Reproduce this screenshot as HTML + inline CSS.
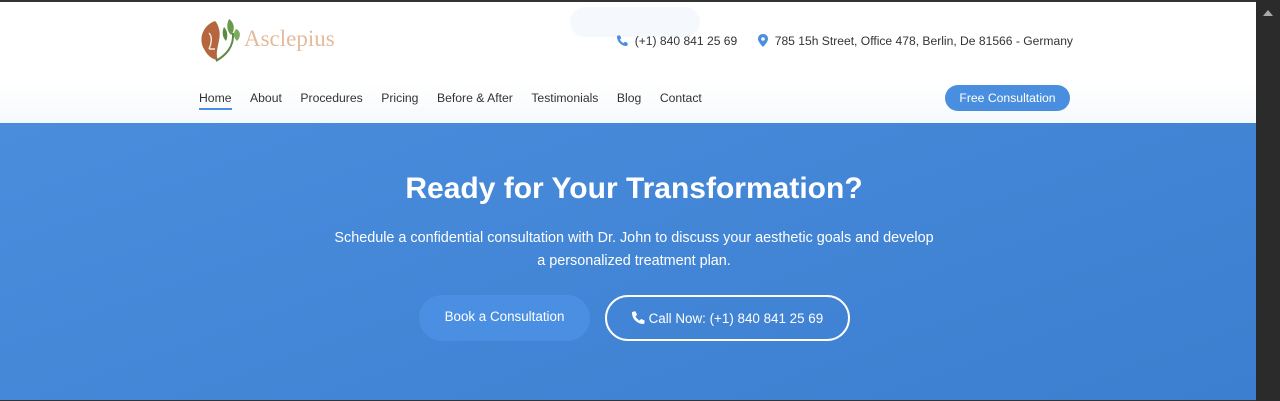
<!DOCTYPE html>
<html><head><meta charset="utf-8"><style>
*{margin:0;padding:0;box-sizing:border-box}
body{width:1280px;height:401px;overflow:hidden;background:#333;font-family:"Liberation Sans",Arial,sans-serif;position:relative}
.wrap{position:absolute;left:0;top:2px;width:1256px;height:398px;background:#fff}
.sb{position:absolute;left:1256px;top:0;width:24px;height:401px;background:#2b2b2b}
.sb:after{content:"";position:absolute;left:7px;top:10px;border:5px solid transparent;border-bottom:6px solid #aaa;border-top:0}
header{position:absolute;left:0;top:0;width:1256px;height:121px;background:linear-gradient(#fff 80px,#f6f9fc)}
.logo{position:absolute;left:198px;top:15px}
.logot{position:absolute;left:244px;top:24px;font-family:"Liberation Serif",serif;font-size:23px;color:#e3bb9c}
.ghost{position:absolute;left:570px;top:5px;width:130px;height:30px;border-radius:15px;background:#f5f8fd}
.info{position:absolute;top:32px;font-size:12.1px;color:#333}
nav{position:absolute;left:199px;top:89px;font-size:12.2px;color:#333}
nav span{margin-right:18.5px;display:inline-block}
nav span.a{border-bottom:2px solid #4a8fdf;padding-bottom:3px}
.fc{position:absolute;left:945px;top:83px;width:125px;height:26px;border-radius:13px;background:#4a8fdf;color:#fff;font-size:12.2px;text-align:center;line-height:26px}
.hero{position:absolute;left:0;top:121px;width:1256px;height:277px;background:linear-gradient(160deg,#4a8ddd,#3c7ecf);color:#fff;text-align:center}
.t{position:absolute;left:6px;width:1256px}
h1{font-size:30px;font-weight:bold;margin-top:49px}
p{font-size:14.4px;line-height:23px;margin-top:21px}
.b1{position:absolute;left:419px;top:172px;width:171px;height:46px;border-radius:23px;background:#4a8fe2;font-size:13.4px;line-height:44px}
.b2{position:absolute;left:605px;top:172px;width:245px;height:46px;border-radius:23px;border:2px solid #fff;font-size:13.4px;line-height:43px}
</style></head><body>
<div class="wrap">
<header>
<svg class="logo" width="44" height="46" viewBox="0 0 44 46">
<path d="M17 4 C5 8 0 22 6 32 C10 40 16 43 20 43 C16 34 24 22 21 12 C20 8 19 6 17 4Z" fill="#b5663f"/>
<path d="M11 16 C15 20 13 28 11 32 M11 32 L17 32" stroke="#f3e6dc" stroke-width="1.5" fill="none"/>
<path d="M18 44 C28 38 36 30 35 16" stroke="#5c8a45" stroke-width="2" fill="none"/>
<path d="M31 2 C37 6 37 14 33 18 C29 14 28 8 31 2Z" fill="#6a9a4c"/>
<path d="M38 12 C43 14 43 20 39 24 C35 20 35 16 38 12Z" fill="#7daa5a"/>
<path d="M26 10 C30 14 30 20 28 24 C24 20 24 14 26 10Z" fill="#5c8a45"/>
</svg>
<div class="logot">Asclepius</div>
<div class="ghost"></div>
<div class="info" style="left:617px"><svg width="11" height="11" viewBox="0 0 16 16" style="vertical-align:-1px"><path d="M15 11.5l-3-1.5c-.5-.2-1 0-1.3.3l-1.2 1.5C7.3 10.7 5.3 8.7 4.2 6.5l1.5-1.2c.4-.3.5-.8.3-1.3L4.5 1C4.3.5 3.7.3 3.2.4L.8 1C.3 1.1 0 1.5 0 2c0 7.7 6.3 14 14 14 .5 0 .9-.3 1-.8l.6-2.4c.1-.5-.1-1.1-.6-1.3z" fill="#4a8fdf"/></svg>&nbsp; (+1) 840 841 25 69</div>
<div class="info" style="left:758px"><svg width="10" height="13" viewBox="0 0 10 13" style="vertical-align:-2px"><path d="M5 0C2 0 0 2 0 5c0 3 5 8 5 8s5-5 5-8c0-3-2-5-5-5z" fill="#4a8fdf"/><circle cx="5" cy="5" r="1.8" fill="#fff"/></svg>&nbsp; 785 15h Street, Office 478, Berlin, De 81566 - Germany</div>
<nav><span class="a">Home</span><span>About</span><span>Procedures</span><span>Pricing</span><span>Before &amp; After</span><span>Testimonials</span><span>Blog</span><span>Contact</span></nav>
<div class="fc">Free Consultation</div>
</header>
<div class="hero">
<div class="t">
<h1>Ready for Your Transformation?</h1>
<p>Schedule a confidential consultation with Dr. John to discuss your aesthetic goals and develop<br>a personalized treatment plan.</p>
</div>
<div class="b1">Book a Consultation</div>
<div class="b2"><svg width="13" height="13" viewBox="0 0 16 16" style="vertical-align:-1px"><path d="M15 11.5l-3-1.5c-.5-.2-1 0-1.3.3l-1.2 1.5C7.3 10.7 5.3 8.7 4.2 6.5l1.5-1.2c.4-.3.5-.8.3-1.3L4.5 1C4.3.5 3.7.3 3.2.4L.8 1C.3 1.1 0 1.5 0 2c0 7.7 6.3 14 14 14 .5 0 .9-.3 1-.8l.6-2.4c.1-.5-.1-1.1-.6-1.3z" fill="#fff"/></svg> Call Now: (+1) 840 841 25 69</div>
</div>
</div>
<div class="sb"></div>
</body></html>
